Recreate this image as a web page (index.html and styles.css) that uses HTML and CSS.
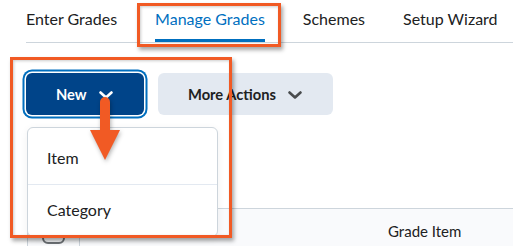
FILE: index.html
```html
<!DOCTYPE html>
<html lang="en">
<head>
<meta charset="utf-8">
<title>Manage Grades</title>
<link rel="stylesheet" href="styles.css">
</head>
<body>
<div class="page">
  <nav class="tabs">
    <a class="tab">Enter Grades</a>
    <a class="tab active">Manage Grades</a>
    <a class="tab">Schemes</a>
    <a class="tab">Setup Wizard</a>
  </nav>

  <div class="toolbar">
    <button class="btn btn-primary">
      <span>New</span>
      <svg class="chev" width="14" height="8" viewBox="0 0 14 8"><path d="M1.5 1.5 L7 6.5 L12.5 1.5" fill="none" stroke="#fff" stroke-width="2.6" stroke-linecap="round" stroke-linejoin="round"/></svg>
    </button>
    <button class="btn btn-secondary">
      <span>More Actions</span>
      <svg class="chev" width="14" height="8" viewBox="0 0 14 8"><path d="M1.5 1.5 L7 6.5 L12.5 1.5" fill="none" stroke="#494c4e" stroke-width="2.6" stroke-linecap="round" stroke-linejoin="round"/></svg>
    </button>
  </div>

  <div class="grid-head">
    <div class="cell cell-check"><span class="checkbox"></span></div>
    <div class="cell cell-name">Grade Item</div>
  </div>

  <div class="menu">
    <div class="menu-item">Item</div>
    <div class="menu-item">Category</div>
  </div>

  <div class="highlight hl-tab"></div>
  <div class="highlight hl-new"></div>

  <svg class="arrow" width="34" height="66" viewBox="0 0 34 66">
    <path d="M10 8 a5 5 0 0 1 10 0 V36 H30 L15 66 L0 36 H10 Z" fill="#f15a24"/>
  </svg>
</div>
</body>
</html>
```

FILE: styles.css
```css
* { box-sizing: border-box; }
html, body { margin: 0; padding: 0; background: #fff; }
body {
  font-family: Lato, "Open Sans", Arial, sans-serif;
  color: #202122;
  width: 513px;
  height: 246px;
  overflow: hidden;
}
.page { position: relative; width: 513px; height: 246px; }

.tabs {
  display: flex;
  gap: 38px;
  margin-left: 26px;
  border-bottom: 1px solid #cdd5dc;
  height: 43px;
}
.tab {
  display: block;
  font-size: 16px;
  line-height: 22px;
  padding-top: 8px;
  height: 42px;
  color: #202122;
  white-space: nowrap;
  border-bottom: 3px solid transparent;
}
.tab.active {
  color: #006fbf;
  border-bottom-color: #006fbf;
}

.toolbar {
  display: flex;
  gap: 14px;
  margin: 30px 0 0 26px;
}
.btn {
  display: flex;
  flex: none;
  align-items: center;
  gap: 12px;
  height: 42px;
  padding: 0 0 0 30px;
  border: none;
  border-radius: 6px;
  font-family: inherit;
  font-weight: 700;
  font-size: 14.7px;
  white-space: nowrap;
}
.btn-primary {
  width: 118px;
  background: #004489;
  color: #fff;
  box-shadow: 0 0 0 1.5px #fff, 0 0 0 3.5px #006fbf;
}
.btn-secondary {
  width: 175px;
  background: #e3e9f1;
  color: #202122;
}
.chev { display: block; margin-top: 1px; }

.grid-head {
  display: flex;
  margin: 93px 0 0 27px;
  border-top: 1px solid #cdd5dc;
  border-left: 1px solid #cdd5dc;
  background: #f9fafc;
  height: 40px;
}
.cell { font-size: 15px; line-height: 20px; }
.cell-check {
  width: 52px;
  border-right: 1px solid #cdd5dc;
  display: flex;
  justify-content: center;
  padding-top: 12px;
}
.checkbox {
  display: block;
  width: 23px;
  height: 23px;
  border: 2px solid #6e7377;
  border-radius: 6px;
  background: #f9fafc;
}
.cell-name { padding: 12px 0 0 308px; }

.menu {
  position: absolute;
  left: 27px;
  top: 127px;
  width: 191px;
  background: #fff;
  border: 1px solid #cdd5dc;
  border-radius: 6px;
  box-shadow: 0 2px 8px rgba(0,0,0,0.06);
}
.menu-item {
  font-size: 16px;
  line-height: 22px;
  padding: 19px 0 15px 19px;
  height: 56px;
}
.menu-item + .menu-item {
  border-top: 1px solid #e3e9f1;
  padding-top: 14px;
  height: 52px;
}

.highlight {
  position: absolute;
  border: 3.5px solid #f15a24;
  box-shadow: 2px 3px 4px rgba(0,0,0,0.35), inset 1px 1px 3px rgba(0,0,0,0.2);
}
.hl-tab { left: 137px; top: 3px; width: 144px; height: 44px; }
.hl-new { left: 10px; top: 57px; width: 222px; height: 181px; }

.arrow {
  position: absolute;
  left: 90px;
  top: 94px;
  filter: drop-shadow(1px 2px 2px rgba(0,0,0,0.3));
}
```
